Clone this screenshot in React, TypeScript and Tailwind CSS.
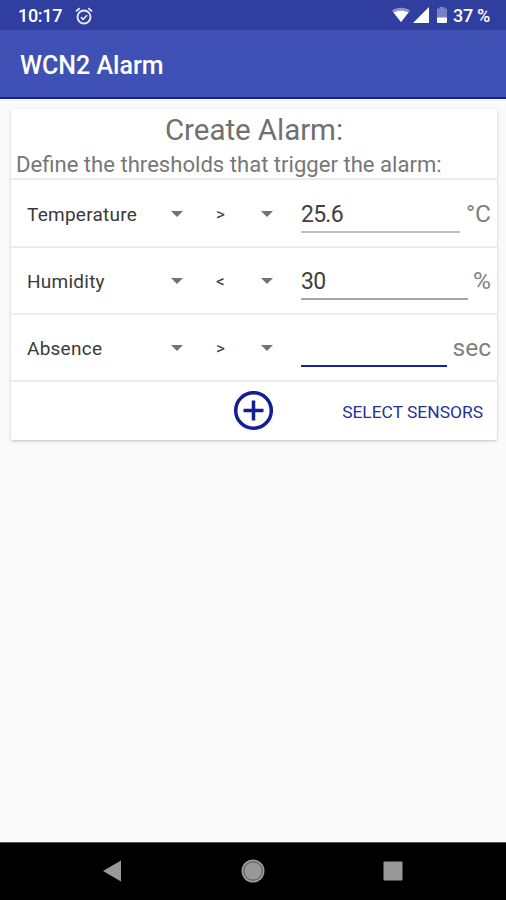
type Threshold = {
  name: string;
  operator: string;
  value: string;
  unit: string;
  spacing: string;
  line: string;
};

const thresholds: Threshold[] = [
  { name: "Temperature", operator: ">", value: "25.6", unit: "°C", spacing: "w-[159px]", line: "bg-[#bebebe]" },
  { name: "Humidity", operator: "<", value: "30", unit: "%", spacing: "w-[167px]", line: "bg-[#a6a6a6]" },
  { name: "Absence", operator: ">", value: "", unit: "sec", spacing: "w-[146px]", line: "bg-[#1a2496]" },
];

function Caret() {
  return (
    <svg width="12" height="6" viewBox="0 0 12 6" className="shrink-0">
      <path d="M0 0h12L6 6z" fill="#737373" />
    </svg>
  );
}

function StatusBar() {
  return (
    <div className="flex h-[30px] shrink-0 items-center bg-[#303f9f] pr-4 pl-[18px] text-white">
      <span className="mt-[2px] text-[18px] leading-5 font-medium tracking-[-0.3px]">10:17</span>
      <svg width="18" height="18" viewBox="0 0 18 18" className="mt-[2px] ml-[13px]" fill="none" stroke="#e8eaf6">
        <circle cx="9" cy="10" r="6.5" strokeWidth="1.9" />
        <path d="M1 4.4 4.7 1.2M17 4.4 13.3 1.2" strokeWidth="1.8" />
        <path d="m5.9 10.2 2.2 2.1 4-4" strokeWidth="1.6" />
      </svg>
      <div className="ml-auto flex items-center">
        <svg width="18" height="16" viewBox="0 0 18 16">
          <path d="M0 3.5C5-.3 13-.3 18 3.5L9 15z" fill="#8c95ca" />
          <path d="M1.500 5.500C6 3 12 3 16.500 5.500L9 15z" fill="#fff" />
        </svg>
        <svg width="16" height="16" viewBox="0 0 16 16" className="ml-[3px]">
          <path d="M0 16 16 0v16z" fill="#fff" />
        </svg>
        <svg width="10" height="16" viewBox="0 0 10 16" className="ml-2">
          <path d="M2.500 1.500V0h5v1.500H9q1 0 1 1V11H0V2.500q0-1 1-1z" fill="#7983c1" />
          <path d="M0 10.500h10V15q0 1-1 1H1q-1 0-1-1z" fill="#fff" />
        </svg>
        <span className="mt-[2px] ml-[6px] text-[18px] leading-5 font-medium tracking-[-0.3px] whitespace-nowrap">37 %</span>
      </div>
    </div>
  );
}

function ThresholdRow({ name, operator, value, unit, spacing, line }: Threshold) {
  return (
    <div className="flex h-[67px] border-t-2 border-[#ececec] pr-[6px] pl-4 first:h-[68px] first:pt-px">
      <div className="flex h-[65px] w-[156px] items-center justify-between">
        <span className="mt-[3px] text-[19px] tracking-[0.25px] text-[#3a3a3a]">{name}</span>
        <Caret />
      </div>
      <div className="ml-[33px] flex h-[65px] w-[57px] items-center justify-between">
        <span className="mt-[3px] text-[17px] text-[#3a3a3a]">{operator}</span>
        <Caret />
      </div>
      <div className="ml-[28px] flex h-[52px] flex-col justify-end">
        <span className="mb-[2px] h-[28px] text-[23px] leading-7 tracking-[-0.75px] text-[#404040]">{value}</span>
        <div className={`h-[2px] ${spacing} ${line}`} />
      </div>
      <span className="mt-[18px] ml-auto text-[24.500px] leading-[30px] text-[#808080]">{unit}</span>
    </div>
  );
}

export default function App() {
  return (
    <div className="flex h-[900px] w-[506px] flex-col overflow-hidden bg-[#fafafa] font-['Roboto','Liberation_Sans',sans-serif]">
      <StatusBar />
      <header className="flex h-[69px] shrink-0 items-center border-b-2 border-[#101d9c] bg-[#3f51b5] pl-5">
        <h1 className="mt-[4px] text-[25px] leading-[30px] font-medium text-white">WCN2 Alarm</h1>
      </header>
      <main className="flex-1 pt-[10px] pr-[9px] pl-[11px]">
        <section className="h-[331px] rounded-[2px] bg-white shadow-[0_1px_3px_rgba(0,0,0,0.24)]">
          <div className="h-[69px] pt-[3px]">
            <h2 className="text-center text-[29.500px] leading-9 tracking-[-0.05px] text-[#707070]">Create Alarm:</h2>
            <p className="pl-[5px] text-[22.100px] leading-8 whitespace-nowrap text-[#777]">
              Define the thresholds that trigger the alarm:
            </p>
          </div>
          <div>
            {thresholds.map((item) => (
              <ThresholdRow key={item.name} {...item} />
            ))}
          </div>
          <div className="flex h-[60px] items-center border-t-2 border-[#ececec]">
            <div className="w-[222px]" />
            <svg width="40" height="40" viewBox="0 0 40 40" fill="none" stroke="#121f94" strokeWidth="3.500">
              <circle cx="20.500" cy="19.500" r="17.800" />
              <path d="M10.500 19.500h20M20.500 9.500v20" />
            </svg>
            <button className="mt-[2px] ml-auto pr-[14px] text-[17.400px] whitespace-nowrap text-[#25309a]">SELECT SENSORS</button>
          </div>
        </section>
      </main>
      <nav className="flex h-[58px] shrink-0 items-center border-t border-[#555] bg-black pb-[2px] pl-[102px]">
        <svg width="20" height="22" viewBox="0 0 20 22">
          <path d="M1 11 19 .500v21z" fill="#999" />
        </svg>
        <svg width="24" height="24" viewBox="0 0 24 24" className="ml-[119px]">
          <circle cx="12" cy="12" r="11.500" fill="#999" />
          <circle cx="12" cy="12" r="9.200" fill="none" stroke="#555" />
        </svg>
        <svg width="20" height="20" viewBox="0 0 20 20" className="ml-[118px]">
          <rect x=".5" y=".5" width="19" height="19" rx="1" fill="#999" />
        </svg>
      </nav>
    </div>
  );
}
